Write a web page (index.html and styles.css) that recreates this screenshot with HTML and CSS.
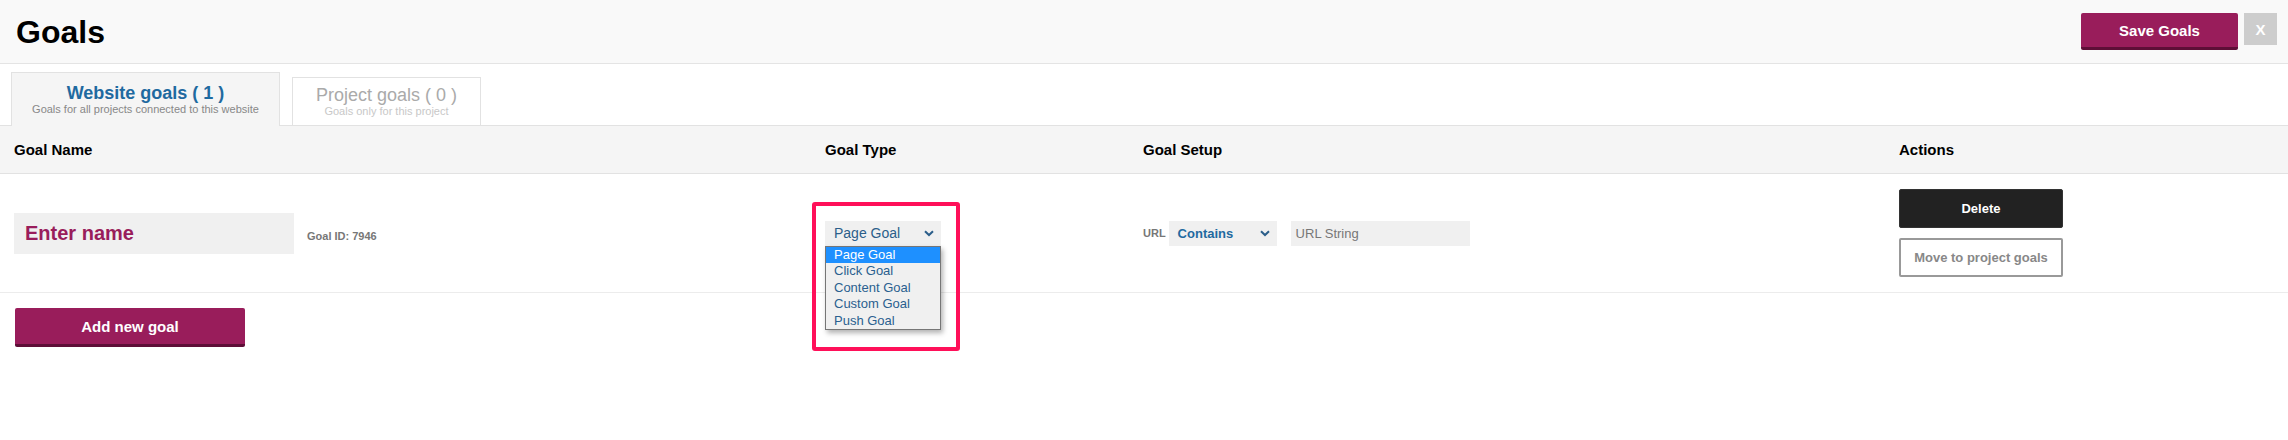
FILE: index.html
```html
<!DOCTYPE html>
<html lang="en">
<head>
<meta charset="utf-8">
<title>Goals</title>
<link rel="stylesheet" href="styles.css">
</head>
<body>
<div class="page">
  <header class="topbar">
    <h1 class="title">Goals</h1>
    <div class="top-actions">
      <button class="btn-save">Save Goals</button>
      <button class="btn-close">X</button>
    </div>
  </header>

  <nav class="tabs">
    <div class="tab tab-active">
      <div class="tab-title">Website goals ( 1 )</div>
      <div class="tab-sub">Goals for all projects connected to this website</div>
    </div>
    <div class="tab tab-idle">
      <div class="tab-title">Project goals ( 0 )</div>
      <div class="tab-sub">Goals only for this project</div>
    </div>
  </nav>

  <div class="table-head">
    <div class="th">Goal Name</div>
    <div class="th">Goal Type</div>
    <div class="th">Goal Setup</div>
    <div class="th">Actions</div>
  </div>

  <div class="row">
    <div class="cell cell-name">
      <div class="name-input">Enter name</div>
      <span class="goal-id">Goal ID: 7946</span>
    </div>
    <div class="cell cell-type">
      <div class="highlight"></div>
      <div class="select-wrap">
        <div class="select select-type">
          <span>Page Goal</span>
          <svg class="chev" width="10" height="7" viewBox="0 0 10 7"><path d="M1 1.2 L5 5 L9 1.2" fill="none" stroke="#2b5e8a" stroke-width="2"/></svg>
        </div>
        <ul class="dropdown">
          <li class="opt opt-sel">Page Goal</li>
          <li class="opt">Click Goal</li>
          <li class="opt">Content Goal</li>
          <li class="opt">Custom Goal</li>
          <li class="opt">Push Goal</li>
        </ul>
      </div>
    </div>
    <div class="cell cell-setup">
      <span class="url-label">URL</span>
      <div class="select select-contains">
        <span>Contains</span>
        <svg class="chev" width="10" height="7" viewBox="0 0 10 7"><path d="M1 1.2 L5 5 L9 1.2" fill="none" stroke="#2b5e8a" stroke-width="2"/></svg>
      </div>
      <div class="url-input">URL String</div>
    </div>
    <div class="cell cell-actions">
      <button class="btn-delete">Delete</button>
      <button class="btn-move">Move to project goals</button>
    </div>
  </div>

  <div class="add-wrap">
    <button class="btn-add">Add new goal</button>
  </div>
</div>
</body>
</html>
```

FILE: styles.css
```css
* { box-sizing: border-box; }
html, body { margin: 0; padding: 0; background: #fff; }
body { font-family: "Liberation Sans", Arial, sans-serif; color: #000; }
button { font-family: "Liberation Sans", Arial, sans-serif; cursor: pointer; }

.page { width: 2288px; height: 440px; }

.topbar {
  height: 64px;
  background: #f9f9f9;
  border-bottom: 1px solid #e4e4e4;
  display: flex;
  justify-content: space-between;
  align-items: center;
  padding: 0 11px 0 16px;
}
.title {
  margin: 0;
  font-size: 32px;
  line-height: 40px;
  font-weight: bold;
  color: #000;
}
.top-actions {
  display: flex;
  align-self: flex-start;
  margin-top: 13px;
  gap: 6px;
}
.btn-save {
  width: 157px;
  height: 37px;
  background: #991d5b;
  border: 0;
  border-bottom: 3px solid #5e0e37;
  border-radius: 2px;
  color: #fff;
  font-size: 15px;
  font-weight: bold;
  padding: 0;
}
.btn-close {
  width: 33px;
  height: 32px;
  background: #cdcdcd;
  border: 0;
  color: #fff;
  font-size: 15px;
  font-weight: bold;
  padding: 0;
}

.tabs {
  height: 61px;
  display: flex;
  align-items: flex-end;
  gap: 12px;
  padding-left: 11px;
  position: relative;
  z-index: 2;
}
.tab {
  text-align: center;
  border: 1px solid #e2e2e2;
  border-bottom: 0;
}
.tab-active {
  width: 269px;
  height: 54px;
  margin-bottom: -1px;
  background: #f5f5f5;
  padding-top: 10px;
}
.tab-idle {
  width: 189px;
  height: 48px;
  background: #fff;
  padding-top: 7px;
}
.tab-title {
  font-size: 18px;
  line-height: 20px;
}
.tab-sub {
  font-size: 11px;
  line-height: 13px;
}
.tab-active .tab-title { color: #1f6aa0; font-weight: bold; }
.tab-active .tab-sub { color: #888; }
.tab-idle .tab-title { color: #aaa; }
.tab-idle .tab-sub { color: #c8c8c8; }

.table-head {
  display: grid;
  grid-template-columns: 811px 318px 756px 1fr;
  padding-left: 14px;
  height: 49px;
  background: #f5f5f5;
  border-top: 1px solid #e2e2e2;
  border-bottom: 1px solid #e2e2e2;
  align-items: center;
}
.th {
  font-size: 15px;
  font-weight: bold;
  line-height: 18px;
  color: #000;
}

.row {
  display: grid;
  grid-template-columns: 811px 318px 756px 1fr;
  padding-left: 14px;
  height: 119px;
  border-bottom: 1px solid #ececec;
  align-items: center;
}
.cell { display: flex; align-items: center; }

.name-input {
  width: 280px;
  height: 41px;
  background: #f0f0f0;
  color: #991d5b;
  font-size: 20px;
  font-weight: bold;
  line-height: 41px;
  padding-left: 11px;
}
.goal-id {
  margin-left: 13px;
  font-size: 11px;
  font-weight: bold;
  color: #777;
  padding-top: 6px;
}

.cell-type { position: relative; height: 100%; }
.highlight {
  position: absolute;
  left: -13px;
  top: 28px;
  width: 148px;
  height: 149px;
  border: 4px solid #ff1059;
  border-radius: 3px;
  z-index: 3;
  pointer-events: none;
}
.select-wrap { position: relative; }
.select {
  height: 25px;
  background: #f0f0f0;
  display: flex;
  align-items: center;
  justify-content: space-between;
  padding: 0 7px 0 9px;
  color: #2b5e8a;
}
.select-type {
  width: 116px;
  font-size: 14px;
}
.dropdown {
  position: absolute;
  left: 0;
  top: 25px;
  width: 116px;
  margin: 0;
  padding: 0;
  list-style: none;
  background: #f0f0f0;
  border: 1px solid #767676;
  box-shadow: 2px 3px 5px rgba(0,0,0,0.3);
  z-index: 4;
}
.opt {
  height: 16.6px;
  line-height: 16.6px;
  font-size: 13px;
  color: #2a5f8f;
  padding-left: 8px;
}
.opt-sel { background: #1e90ff; color: #fff; }

.cell-setup { gap: 0; }
.url-label {
  font-size: 11px;
  font-weight: bold;
  color: #777;
  margin-right: 3px;
}
.select-contains {
  width: 108px;
  font-size: 13px;
  font-weight: bold;
  color: #1f6aa0;
  padding-left: 9px;
}
.url-input {
  margin-left: 14px;
  width: 179px;
  height: 25px;
  background: #f0f0f0;
  color: #777;
  font-size: 13px;
  line-height: 25px;
  padding-left: 5px;
}

.cell-actions {
  flex-direction: column;
  align-items: flex-start;
  gap: 10px;
}
.btn-delete {
  width: 164px;
  height: 39px;
  background: #222;
  border: 1px solid #333;
  border-radius: 2px;
  color: #fff;
  font-size: 13px;
  font-weight: bold;
  padding: 0;
}
.btn-move {
  width: 164px;
  height: 39px;
  background: #fff;
  border: 2px solid #999;
  border-radius: 2px;
  color: #888;
  font-size: 13px;
  font-weight: bold;
  padding: 0;
}

.add-wrap { padding: 15px 0 0 15px; }
.btn-add {
  width: 230px;
  height: 39px;
  background: #991d5b;
  border: 0;
  border-bottom: 3px solid #5e0e37;
  border-radius: 2px;
  color: #fff;
  font-size: 15px;
  font-weight: bold;
  padding: 0;
}
```
